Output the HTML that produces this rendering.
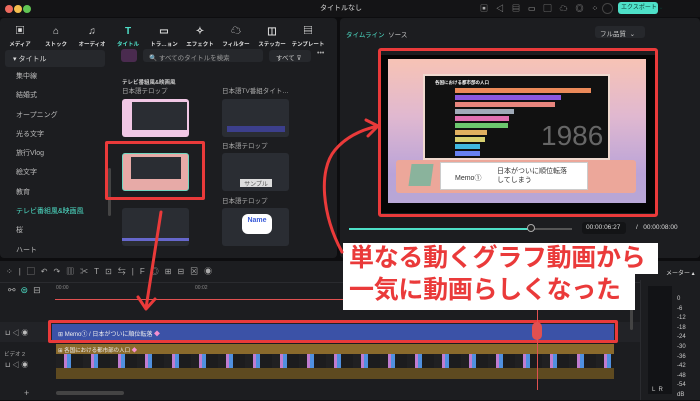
<!DOCTYPE html>
<html><head><meta charset="utf-8"><style>
*{margin:0;padding:0;box-sizing:border-box}
body{width:700px;height:400px;background:#0d0d0f;font-family:"Liberation Sans","Noto Sans CJK JP",sans-serif;color:#ddd;position:relative;overflow:hidden;font-size:7px}
.a{position:absolute}
.dot{width:8px;height:8px;border-radius:50%;top:5px}
.side div{height:19.3px;line-height:19.3px;padding-left:16px;color:#bbb;font-size:7px}
.card{background:#2a2d33;border-radius:3px}
.lbl{color:#aaa;font-size:6.5px}
.tb span{display:inline-block;width:36px;text-align:center;font-size:5.5px;color:#ddd;white-space:nowrap;overflow:hidden;font-weight:bold}
.tb div{white-space:nowrap}
.bar{position:absolute;left:30px;height:5px}
.cal{background:#fff;color:#ea3a3a;font-weight:bold;font-size:25px;line-height:30px;padding-left:6px;white-space:nowrap;letter-spacing:-0.3px}
</style></head><body>
<!-- title bar -->
<div class="a" style="left:0;top:0;width:700px;height:17px;background:#141416"></div>
<div class="a dot" style="left:5px;background:#ed6a5e"></div>
<div class="a dot" style="left:14px;background:#f5bf4f"></div>
<div class="a dot" style="left:23px;background:#61c554"></div>
<div class="a" style="left:320px;top:3px;font-size:7px;color:#ddd">タイトルなし</div>
<div class="a" style="left:618px;top:2px;width:40px;height:12px;background:#4ee0c8;border-radius:3px;color:#0b3a33;font-size:6px;line-height:12px;padding-left:3px;white-space:nowrap">エクスポート ⌄</div>
<div class="a" style="left:602px;top:3px;width:11px;height:11px;border:1.5px solid #444;border-radius:50%"></div>
<div class="a" style="left:480px;top:3px;color:#aaa;font-size:8px;letter-spacing:8px;white-space:nowrap">▣◁▤▭▢☁◎⁘</div>

<!-- left panel -->
<div class="a" style="left:0;top:18px;width:337px;height:240px;background:#1c1d20;border-radius:4px"></div>
<div class="a tb" style="left:2px;top:22px;width:330px">
<div><span style="font-size:10px">▣</span><span style="font-size:10px">⌂</span><span style="font-size:10px">♫</span><span style="color:#4ee0c8;font-size:10px">T</span><span style="font-size:10px">▭</span><span style="font-size:10px">✧</span><span style="font-size:10px">☁</span><span style="font-size:10px">◫</span><span style="font-size:10px">▤</span></div>
<div style="margin-top:1px"><span>メディア</span><span>ストック</span><span>オーディオ</span><span style="color:#4ee0c8">タイトル</span><span>トラ…ョン</span><span>エフェクト</span><span>フィルター</span><span>ステッカー</span><span>テンプレート</span></div>
</div>
<div class="a" style="left:5px;top:50px;width:100px;height:17px;background:#26282c;border-radius:3px;padding:4px 0 0 8px;font-size:7px">▾ タイトル</div>
<div class="a side" style="left:0;top:67px;width:110px">
<div>集中線</div><div>結婚式</div><div>オープニング</div><div>光る文字</div><div>旅行Vlog</div><div>絵文字</div><div>教育</div><div style="color:#4ee0c8">テレビ番組風&amp;映画風</div><div>桜</div><div>ハート</div>
</div>
<div class="a" style="left:108px;top:168px;width:3px;height:48px;background:#444;border-radius:2px"></div>
<div class="a" style="left:121px;top:49px;width:16px;height:13px;background:#4a2b4f;border-radius:3px"></div>
<div class="a" style="left:143px;top:49px;width:120px;height:13px;background:#26282c;border-radius:3px;color:#999;padding:3px 0 0 6px;font-size:6.5px">🔍 すべてのタイトルを検索</div>
<div class="a" style="left:269px;top:50px;width:42px;height:12px;background:#26282c;border-radius:3px;color:#ccc;padding:2px 0 0 7px;font-size:6.5px">すべて ⊽</div>
<div class="a" style="left:317px;top:50px;color:#aaa">•••</div>
<div class="a" style="left:122px;top:78px;font-size:5.5px;font-weight:bold;color:#ccc">テレビ番組風&amp;映画風</div>
<div class="a lbl" style="left:122px;top:85px">日本語テロップ</div>
<div class="a lbl" style="left:222px;top:85px">日本語TV番組タイト…</div>
<div class="a card" style="left:122px;top:99px;width:67px;height:38px;background:#f1c7e5"></div>
<div class="a" style="left:132px;top:102px;width:55px;height:28px;background:#2a2d33"></div>
<div class="a card" style="left:222px;top:99px;width:67px;height:38px"></div>
<div class="a" style="left:227px;top:126px;width:58px;height:6px;background:#3c3f8c"></div>
<div class="a lbl" style="left:222px;top:140px">日本語テロップ</div>
<div class="a card" style="left:122px;top:153px;width:67px;height:38px;background:#e7aaa7;border:1.5px solid #6fd6c0"></div>
<div class="a" style="left:131px;top:157px;width:50px;height:22px;background:#2a2d33"></div>
<div class="a card" style="left:222px;top:153px;width:67px;height:38px"></div>
<div class="a" style="left:240px;top:179px;width:32px;height:8px;background:#ddd;color:#555;font-size:6px;text-align:center">サンプル</div>
<div class="a lbl" style="left:222px;top:195px">日本語テロップ</div>
<div class="a card" style="left:122px;top:208px;width:67px;height:38px"></div>
<div class="a" style="left:122px;top:238px;width:67px;height:3px;background:#6667cc"></div>
<div class="a card" style="left:222px;top:208px;width:67px;height:38px"></div>
<div class="a" style="left:242px;top:214px;width:30px;height:20px;background:#fff;border-radius:6px;color:#3a5bd8;font-size:7px;font-weight:bold;text-align:center;line-height:14px">Name</div>
<div class="a" style="left:105px;top:141px;width:100px;height:59px;border:3px solid #ea3a3a;border-radius:2px"></div>

<!-- right panel -->
<div class="a" style="left:340px;top:18px;width:360px;height:240px;background:#1c1d20;border-radius:4px"></div>
<div class="a" style="left:346px;top:29px;font-size:6.5px;color:#4ee0c8">タイムライン <span style="color:#ccc">&nbsp;ソース</span></div>
<div class="a" style="left:595px;top:26px;width:50px;height:12px;background:#26282c;border-radius:3px;color:#ccc;font-size:6.5px;padding:2px 0 0 5px">フル品質 &nbsp;⌄</div>
<div class="a" style="left:381px;top:55px;width:274px;height:158px;background:#050505"></div>
<div class="a" style="left:388px;top:59px;width:258px;height:144px;background:linear-gradient(#f7c3b5,#e0b8d0 40%,#b9a3d8 80%,#b8a7d6)"></div>
<div class="a" style="left:423px;top:74px;width:187px;height:86px;background:#111;border:2px solid #f0d9cf">
<div class="a" style="left:10px;top:4px;font-size:4.5px;color:#fff;font-weight:bold">各国における都市部の人口</div>
<div class="bar" style="top:12px;width:136px;background:#ec8a5a"></div>
<div class="bar" style="top:19px;width:106px;background:#8a58e0"></div>
<div class="bar" style="top:26px;width:100px;background:#e8857d"></div>
<div class="bar" style="top:33px;width:59px;background:#a0aab8"></div>
<div class="bar" style="top:40px;width:54px;background:#e070b0"></div>
<div class="bar" style="top:47px;width:53px;background:#6cc76e"></div>
<div class="bar" style="top:54px;width:32px;background:#e0b060"></div>
<div class="bar" style="top:61px;width:30px;background:#d8d070"></div>
<div class="bar" style="top:68px;width:25px;background:#40b8e0"></div>
<div class="bar" style="top:75px;width:25px;background:#6680f0"></div>
<div class="a" style="left:116px;top:44px;font-size:28px;color:#666">1986</div>
</div>
<div class="a" style="left:396px;top:160px;width:240px;height:33px;background:#eca79a;border-radius:3px"></div>
<div class="a" style="left:410px;top:164px;width:22px;height:22px;background:#8ab39c;transform:skewX(-8deg)"></div>
<div class="a" style="left:440px;top:162px;width:148px;height:28px;background:#fff;border:1px solid #ccc;font-size:7px;color:#333">
<span class="a" style="left:14px;top:10px">Memo①</span><span class="a" style="left:56px;top:4px;line-height:9px">日本がついに順位転落<br>してしまう</span></div>
<div class="a" style="left:378px;top:48px;width:280px;height:169px;border:3px solid #ea3a3a;border-radius:3px"></div>
<div class="a" style="left:349px;top:228px;width:183px;height:1.5px;background:#4ee0c8"></div>
<div class="a" style="left:532px;top:228px;width:40px;height:1.5px;background:#555"></div>
<div class="a" style="left:527px;top:224px;width:8px;height:8px;border-radius:50%;border:1.5px solid #aaa;background:#222"></div>
<div class="a" style="left:582px;top:222px;width:44px;height:12px;background:#131416;border-radius:3px;font-size:6.5px;color:#ddd;padding:2px 0 0 4px">00:00:06:27</div>
<div class="a" style="left:636px;top:224px;font-size:6.5px;color:#ddd">/ &nbsp; 00:00:08:00</div>

<!-- timeline -->
<div class="a" style="left:0;top:261px;width:700px;height:139px;background:#1c1d20"></div>
<div class="a" style="left:6px;top:266px;font-size:8px;color:#aaa;letter-spacing:6px;white-space:nowrap">⁘|▢↶↷▥✂T⊡⇆|F◎⊞⊟⊠◉</div>
<div class="a" style="left:0;top:282px;width:640px;height:1px;background:#2a2b2f"></div>
<div class="a" style="left:8px;top:285px;font-size:9px;color:#aaa;letter-spacing:5px">⚯<span style="color:#4ee0c8">⊜</span>⊟</div>
<div class="a" style="left:56px;top:285px;font-size:5px;color:#888">00:00</div>
<div class="a" style="left:195px;top:285px;font-size:5px;color:#888">00:02</div>
<div class="a" style="left:55px;top:299px;width:560px;height:1px;background:#e05050"></div>
<div class="a" style="left:0;top:322px;width:640px;height:20px;background:#222327"></div>
<div class="a" style="left:5px;top:328px;font-size:7px;color:#bbb">⊔ ◁ ◉</div>
<div class="a" style="left:52px;top:324px;width:562px;height:16px;background:#3b52a7;color:#eee;font-size:6px;padding:5px 0 0 6px">⊞ Memo① / 日本がついに順位転落 <span style="color:#f58fd0">◆</span></div>
<div class="a" style="left:48px;top:320px;width:570px;height:23px;border:3px solid #ea3a3a;border-radius:2px"></div>
<div class="a" style="left:56px;top:344px;width:558px;height:10px;background:#8a6a2c;color:#eee;font-size:5.5px;padding:2px 0 0 2px">⊞ 各国における都市部の人口 <span style="color:#f58fd0">◆</span></div>
<div class="a" style="left:56px;top:354px;width:558px;height:14px;background:repeating-linear-gradient(90deg,#202022 0 8px,#c07cd0 8px 11px,#5090e0 11px 15px,#1c1c1e 15px 27px)"></div>
<div class="a" style="left:56px;top:368px;width:558px;height:11px;background:#5e4a20"></div>
<div class="a" style="left:4px;top:350px;font-size:5.5px;color:#aaa">ビデオ 2</div>
<div class="a" style="left:5px;top:360px;font-size:7px;color:#bbb">⊔ ◁ ◉</div>
<div class="a" style="left:537px;top:300px;width:1px;height:90px;background:#e05050"></div>
<div class="a" style="left:532px;top:322px;width:10px;height:18px;border-radius:5px;background:#e05050"></div>
<div class="a" style="left:56px;top:391px;width:68px;height:4px;background:#444;border-radius:2px"></div>
<div class="a" style="left:630px;top:300px;width:3px;height:30px;background:#444;border-radius:2px"></div>
<div class="a" style="left:24px;top:388px;color:#aaa;font-size:9px">+</div>
<div class="a" style="left:640px;top:280px;width:60px;height:120px;background:#1c1d20;border-left:1px solid #2a2b2f"></div>
<div class="a" style="left:648px;top:286px;width:24px;height:108px;background:#121316"></div>
<div class="a" style="left:677px;top:295px;font-size:6px;color:#ccc;line-height:9.6px">0<br>-6<br>-12<br>-18<br>-24<br>-30<br>-36<br>-42<br>-48<br>-54<br>dB</div>
<div class="a" style="left:652px;top:387px;font-size:6px;color:#ccc">L &nbsp;R</div>
<div class="a" style="left:666px;top:268px;font-size:6px;color:#ddd">メーター ▴</div>

<!-- callout -->
<div class="a cal" style="left:343px;top:243px;width:315px;height:31px">単なる動くグラフ動画から</div>
<div class="a cal" style="left:343px;top:273px;width:292px;height:37px;line-height:34px">一気に動画らしくなった</div>

<!-- arrows -->
<svg class="a" style="left:0;top:0" width="700" height="400">
<g fill="none" stroke="#ea3a3a" stroke-width="3" stroke-linecap="round" stroke-linejoin="round">
<path d="M161 212 L146 308"/>
<path d="M138 297 L146 309 L155 299"/>
<path d="M342 252 C322 215 318 170 335 150 C345 138 360 130 378 126"/>
<path d="M366 120 L378 126 L368 136"/>
</g></svg>
</body></html>
